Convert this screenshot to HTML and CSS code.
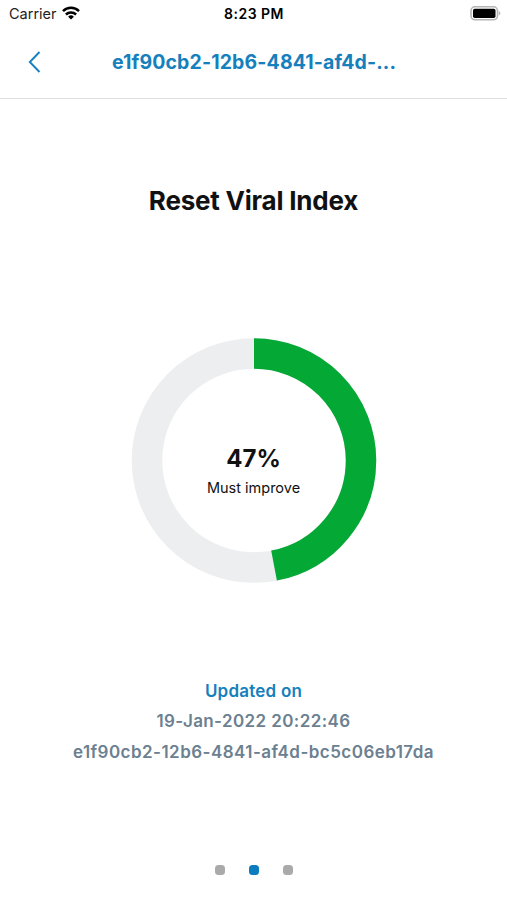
FILE: index.html
```html
<!DOCTYPE html>
<html lang="en">
<head>
<meta charset="utf-8">
<title>Reset Viral Index</title>
<link rel="stylesheet" href="styles.css">
</head>
<body>
<div class="status">
  <div class="carrier"><span class="carrier-name">Carrier</span>
    <svg class="wifi" viewBox="0 0 18 14" width="18" height="14"><g fill="none" stroke="#000" stroke-width="2.5"><path d="M1 5.1a11.5 11.5 0 0 1 16 0"/><path d="M3.9 8.5a7.4 7.4 0 0 1 10.2 0"/></g><path d="M9 13.6 6.1 10.7a4.1 4.1 0 0 1 5.8 0z"/></svg>
  </div>
  <time class="clock">8:23 PM</time>
  <svg class="battery" viewBox="0 0 31 15" width="31" height="15"><rect x="1" y=".8" width="26.5" height="13" rx="4" fill="none" stroke="#b5b5b5" stroke-width="1.6"/><rect x="3" y="2.8" width="22.5" height="9.2" rx="1.8"/><path d="M28.8 5c2 .8 2 3.7 0 4.5z" fill="#b5b5b5"/></svg>
</div>
<header class="nav">
  <svg class="back" viewBox="0 0 14 22" width="14" height="22"><path d="M12.5 1 2.8 11 12.5 21" fill="none" stroke="#1680bd" stroke-width="1.9"/></svg>
  <span class="nav-title">e1f90cb2-12b6-4841-af4d-...</span>
</header>
<main class="main">
  <h1 class="title">Reset Viral Index</h1>
  <div class="chart">
    <svg class="ring" viewBox="0 0 246 246" width="246" height="246"><g fill="none" stroke-width="30.5"><circle cx="123" cy="123.5" r="107" stroke="#eceeef"/><circle cx="123" cy="123.5" r="107" stroke="#04a834" pathLength="100" stroke-dasharray="47 53" transform="rotate(-90 123 123.5)"/></g></svg>
    <div class="reading"><strong class="percent">47%</strong><span class="verdict">Must improve</span></div>
  </div>
  <div class="details"><span class="updated">Updated on</span><span class="date">19-Jan-2022 20:22:46</span><span class="uuid">e1f90cb2-12b6-4841-af4d-bc5c06eb17da</span></div>
</main>
<div class="dots"><i class="dot"></i><i class="dot active"></i><i class="dot"></i></div>
</body>
</html>
```
FILE: styles.css
```css
* { box-sizing: border-box; }
body { margin: 0; height: 900px; display: flex; flex-direction: column; background: #fff; color: #111; font-family: Inter, sans-serif; white-space: nowrap; overflow: hidden; }
.status { height: 28px; display: grid; grid-template-columns: 1fr auto 1fr; padding: 0 6px 0 9px; color: #000; }
.carrier { display: flex; gap: 5px; font-size: 14.5px; line-height: 28px; color: #222; }
.wifi { margin-top: 6px; }
.clock { font-size: 14px; font-weight: 600; line-height: 28px; letter-spacing: .5px; margin-right: 2px; }
.battery { justify-self: end; margin-top: 6px; }
.nav { height: 71px; border-bottom: 1px solid #dedede; display: grid; grid-template-columns: 28px 1fr 28px; padding: 0 27px; }
.back { margin-top: 23px; }
.nav-title { color: #1680bd; text-align: center; font-size: 19.5px; font-weight: 700; line-height: 69px; letter-spacing: .13px; padding-left: 1px; }
.main { flex: 1; display: flex; flex-direction: column; align-items: center; }
.title { margin: 85px 0 0; font-size: 26px; font-weight: 700; line-height: 34px; letter-spacing: -.21px; }
.chart { display: grid; width: 246px; height: 246px; margin-top: 119px; }
.ring, .reading { grid-area: 1 / 1; }
.reading { display: flex; flex-direction: column; align-items: center; padding-top: 107px; }
.percent { font-size: 24px; line-height: 30px; }
.verdict { font-size: 14.5px; line-height: 28px; }
.details { margin-top: 93px; display: flex; flex-direction: column; align-items: center; font-size: 17px; font-weight: 600; line-height: 30.3px; color: #6b8090; letter-spacing: .4px; }
.updated { color: #1680bd; letter-spacing: .22px; }
.uuid { letter-spacing: .46px; }
.dots { height: 35px; display: flex; justify-content: center; gap: 24px; }
.dot { width: 10px; height: 10px; border-radius: 3.5px; background: #aaa; }
.active { background: #0b7cbe; }
```
